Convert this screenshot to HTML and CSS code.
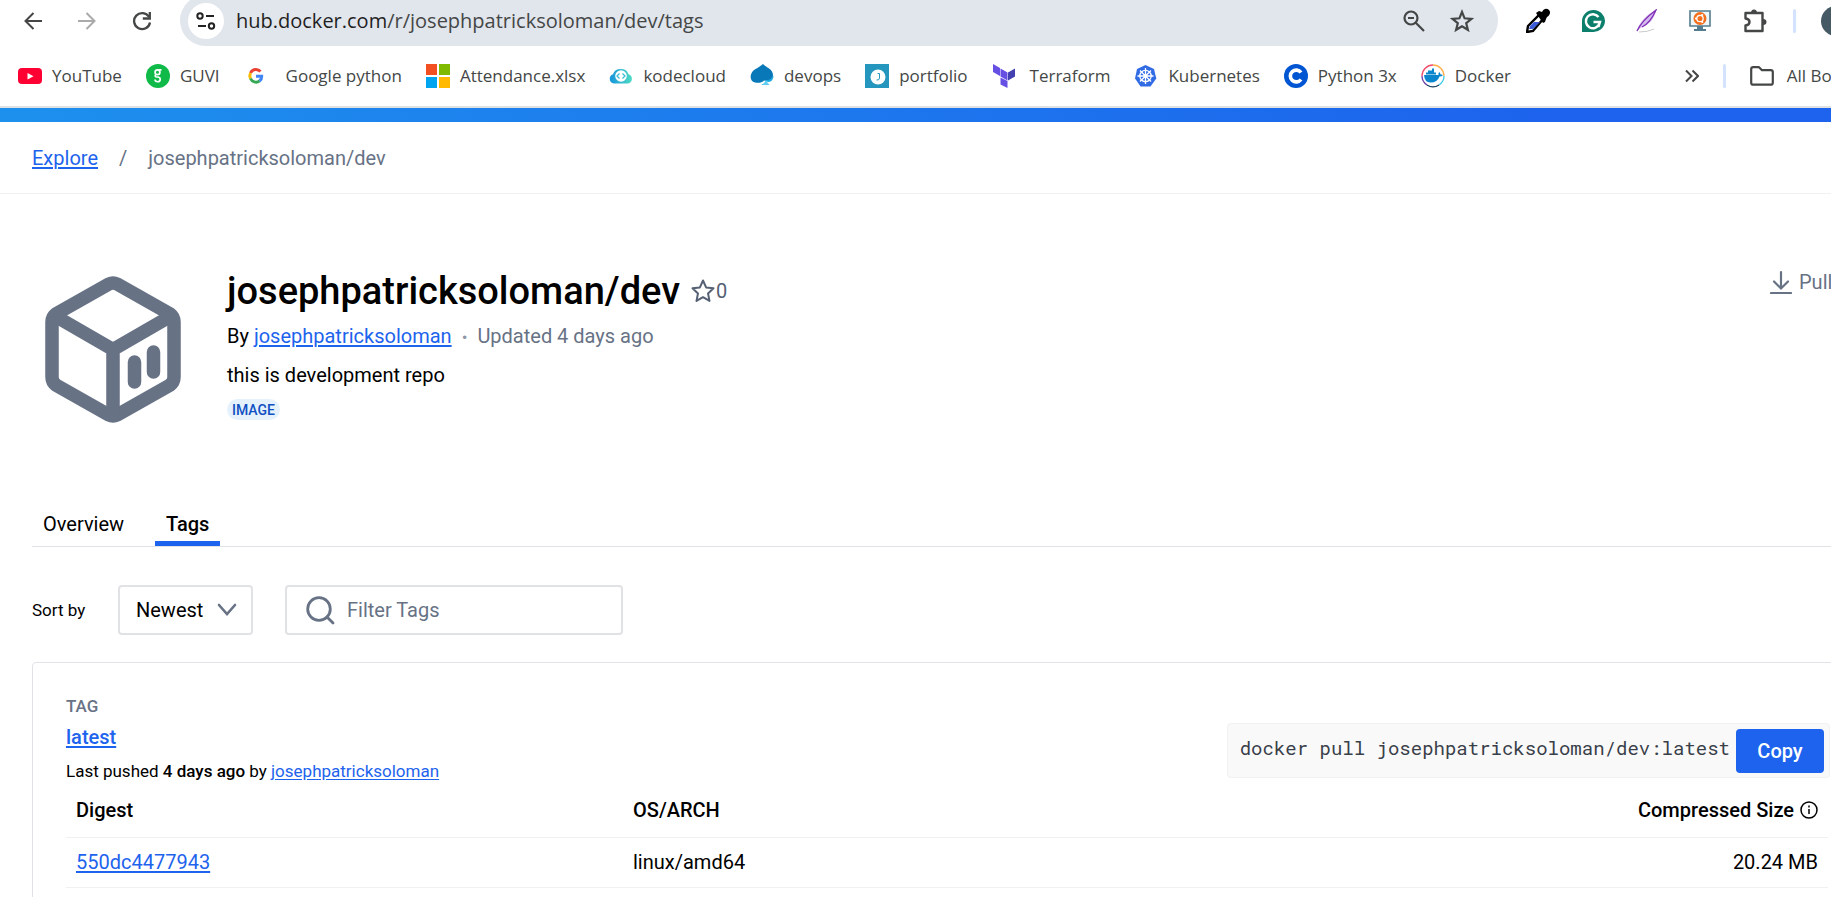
FILE: index.html
```html
<!DOCTYPE html>
<html lang="en">
<head>
<meta charset="utf-8">
<title>josephpatricksoloman/dev Tags</title>
<link rel="stylesheet" href="styles.css">
</head>
<body>
<header class="browser">
  <div class="toolbar">
    <div class="nav">
      <button class="icon-button" aria-label="Back"><svg width="18" height="18" viewBox="0 0 18 18" fill="none" stroke="#444746" stroke-width="2"><path d="M18 9H2M9.500 1L1.500 9l8 8"/></svg></button>
      <button class="icon-button" aria-label="Forward"><svg width="18" height="18" viewBox="0 0 18 18" fill="none" stroke="#aaa" stroke-width="2"><path d="M0 9h16M8.500 1l8 8-8 8"/></svg></button>
      <button class="icon-button" aria-label="Reload"><svg width="20" height="20" viewBox="0 0 20 20" fill="none" stroke="#444746" stroke-width="2.300"><path d="M17 6A8 8 0 1 0 18 11.500"/><path d="M17.800 1v6.500h-7"/></svg></button>
    </div>
    <div class="omnibox">
      <button class="site-info" aria-label="Site information"><svg width="20" height="18" viewBox="0 0 20 18" fill="none" stroke="#222" stroke-width="2"><circle cx="4" cy="4" r="2.700"/><path d="M10 4h8M2 14h8"/><circle cx="15.500" cy="14" r="2.700"/></svg></button>
      <span class="url"><span class="host">hub.docker.com</span>/r/josephpatricksoloman/dev/tags</span>
      <button class="icon-button" aria-label="Zoom"><svg width="22" height="22" viewBox="0 0 22 22" fill="none" stroke="#444746" stroke-width="2.200"><circle cx="8" cy="8" r="6.500"/><path d="M5 8h6M12.500 12.500L21 21"/></svg></button>
      <button class="icon-button" aria-label="Bookmark this tab"><svg width="24" height="24" viewBox="0 0 24 24" fill="none" stroke="#444746" stroke-width="2.200"><path d="M12 3l2.600 6.300 6.900.500-5.300 4.400 1.700 6.600L12 17.200l-5.900 3.600 1.700-6.600L2.500 9.800l6.900-.500z"/></svg></button>
    </div>
    <div class="extensions">
      <button class="icon-button" aria-label="Colour picker"><svg width="24" height="25" viewBox="0 0 24 25"><path d="M1 24l1-6L13 7l4 4L7 23z" fill="#fff" stroke="#000" stroke-width="2.400"/><path d="M3 21l1-3 4-4h6l-7 7z" fill="#3b5bd9"/><path d="M10 5l3-2 3 1c2-4 5-4 7-2s1 5-2 7l-1 2-1 3-2 1z" fill="#000"/></svg></button>
      <button class="icon-button" aria-label="Grammar check"><svg width="24" height="24" viewBox="0 0 24 24"><path d="M1 23V12A11.500 11 0 1 1 12 23z" fill="#0b7f6c"/><path d="M17.500 8A7 7 0 1 0 18.500 14.500M12.500 13H19l-1.500 5" fill="none" stroke="#fff" stroke-width="2.400"/></svg></button>
      <button class="icon-button" aria-label="Feather"><svg width="22" height="24" viewBox="0 0 22 24"><path d="M2 21C3 13 10 6 20 1c-1 7-6 15-14 17z" fill="#d6bcec"/><path d="M1 22C5 13 12 7 20 1 17 8 12 15 6 18" fill="none" stroke="#8130b8" stroke-width="1.300"/><path d="M3 23q9 0 15-3" fill="none" stroke="#ccc"/></svg></button>
      <button class="icon-button" aria-label="Remote desktop"><svg width="22" height="23" viewBox="0 0 22 23"><path d="M1 2h20v15H1z" fill="#eef7fa" stroke="#557d90" stroke-width="1.600"/><circle cx="11" cy="9.500" r="6.500" fill="#f4701e"/><circle cx="11" cy="9.500" r="3.200" fill="none" stroke="#fff" stroke-width="1.300"/><circle cx="7" cy="9.500" r="1.100" fill="#fff"/><circle cx="13.200" cy="6" r="1.100" fill="#fff"/><circle cx="13.200" cy="13" r="1.100" fill="#fff"/><path d="M8 17h6v3h3v2H5v-2h3z" fill="#557d90"/></svg></button>
      <button class="icon-button" aria-label="Extensions"><svg width="26" height="26" viewBox="0 0 26 26"><path d="M3.500 5h17v18h-17v-5.500q4-.500 4-3.500t-4-3.500z" fill="none" stroke="#444746" stroke-width="2.400" stroke-linejoin="round"/><path d="M9 5a3 3.500 0 0 1 6 0zM21 11a3.500 3 0 0 1 0 6z" fill="#444746"/></svg></button>
      <span class="divider"></span>
      <button class="avatar" aria-label="Profile">J</button>
    </div>
  </div>
  <nav class="bookmarks">
    <a class="bookmark" href="#"><svg width="24" height="24" viewBox="0 0 24 24"><rect y="4" width="24" height="16" rx="4" fill="#f03"/><path d="M9.500 9v6.500l6-3.200z" fill="#fff"/></svg><span>YouTube</span></a>
    <a class="bookmark" href="#"><svg width="24" height="24" viewBox="0 0 24 24"><circle cx="12" cy="12" r="12" fill="#0fba48"/><g fill="none" stroke="#fff" stroke-width="1.700"><circle cx="11.500" cy="8.300" r="2.400"/><path d="M15.500 5.800h-3M9.800 10.500q-1.500 2 .7 2.500h1.500a2.600 2.400 0 1 1-3 2.500"/></g></svg><span>GUVI</span></a>
    <a class="bookmark spaced" href="#"><svg width="24" height="24" viewBox="0 0 24 24" fill="none" stroke-width="3"><path d="M16.500 7.500A6 6 0 0 0 6.500 9" stroke="#ea4335"/><path d="M6.500 9a6 6 0 0 0 0 5.500" stroke="#fbbc05"/><path d="M6.500 14.500a6 6 0 0 0 9 2.500" stroke="#34a853"/><path d="M15.500 17a6 6 0 0 0 2.200-4.800H12" stroke="#4285f4"/></svg><span>Google python</span></a>
    <a class="bookmark" href="#"><svg width="24" height="24" viewBox="0 0 24 24"><path d="M0 0h11v11H0z" fill="#f25022"/><path d="M13 0h11v11H13z" fill="#7fba00"/><path d="M0 13h11v11H0z" fill="#00a4ef"/><path d="M13 13h11v11H13z" fill="#ffb900"/></svg><span>Attendance.xlsx</span></a>
    <a class="bookmark" href="#"><svg width="24" height="24" viewBox="0 0 24 24"><defs><linearGradient id="kode"><stop stop-color="#1595dc"/><stop offset="1" stop-color="#4fdcc4"/></linearGradient></defs><path d="M5 19.500a4.800 4.800 0 0 1-1-9.300 8 7 0 0 1 15.500 0 4.800 4.800 0 0 1-.5 9.300z" fill="url(#kode)"/><circle cx="12" cy="12" r="5.800" fill="#fff"/><path d="M10.500 9.500L8 12l2.500 2.500M13.500 9.500L16 12l-2.500 2.500" fill="none" stroke="#35bcd5" stroke-width="1.200"/></svg><span>kodecloud</span></a>
    <a class="bookmark" href="#"><svg width="24" height="24" viewBox="0 0 24 24"><path d="M13 0c3 3.500 10 5 10 11 0 5-5 7-9 5.500C12 19 8 19 5 18.500 1 17.500 0 14 1 10.500 2.500 5 9 4 13 0z" fill="#0878b8"/><path d="M23.500 11.500c0 5-3.500 7.500-7 6q0 2 3 3.500h-8q4-2 4.500-5 5 .5 7.500-4.500z" fill="#18a8de"/><path d="M11 21q4-1 4.500-4.500l1.500.5q0 2 2.500 4z" fill="#62cdf2"/></svg><span>devops</span></a>
    <a class="bookmark" href="#"><svg width="24" height="24" viewBox="0 0 24 24"><path d="M0 0h24v24H0z" fill="#2596be"/><circle cx="13" cy="13" r="7.500" fill="#fff"/><path d="M12.500 9.500h2V14q0 2.500-3 2" fill="none" stroke="#2596be"/></svg><span>portfolio</span></a>
    <a class="bookmark wide" href="#"><svg width="24" height="24" viewBox="0 0 24 24"><path d="M1 0l7 4v8L1 8zM8.500 4.500l7 4v8l-7-4zM8.500 13.500l7 3.500v7l-7-3.500z" fill="#6650e4"/><path d="M16 8.500l7-4v8l-7 4z" fill="#4340b0"/></svg><span>Terraform</span></a>
    <a class="bookmark" href="#"><svg width="24" height="24" viewBox="0 0 24 24"><path d="M11.500 1l8.500 4 2.300 9.500L16.500 22.500H6.500L1 14.500 3 5z" fill="#326ce5"/><g fill="none" stroke="#fff" stroke-width="1.300"><circle cx="11.500" cy="12" r="5.700"/><path d="M11.500 4v16M3.500 12h16M6 6.500l11 11M17 6.500l-11 11"/></g><circle cx="11.500" cy="12" r="1.800" fill="#fff"/></svg><span>Kubernetes</span></a>
    <a class="bookmark" href="#"><svg width="24" height="24" viewBox="0 0 24 24"><circle cx="12" cy="12" r="12" fill="#0056d2"/><path d="M17 8.500a5.900 5.900 0 1 0 0 7" fill="none" stroke="#fff" stroke-width="3.600"/></svg><span>Python 3x</span></a>
    <a class="bookmark" href="#"><svg width="24" height="24" viewBox="0 0 24 24"><g fill="none" stroke-width="1.300"><path d="M12 1A11 11 0 0 0 1 12" stroke="#f04c6c"/><path d="M1 12a11 11 0 0 0 5 9" stroke="#6a3ca8"/><path d="M6 21a11 11 0 0 0 12 0" stroke="#173d58"/><path d="M18 21a11 11 0 0 0 5-9" stroke="#3cc8e8"/><path d="M23 12A11 11 0 0 0 12 1" stroke="#ffb04a"/></g><path d="M3 11h14.500q-.5-2 .8-3 1.200 1 1.200 2.500 1.500-.3 2.500.5-1 1.500-3.500 1.500-2 6-9 6Q3.500 18.500 3 11zM5 8.500h10v2H5zM7 6.500h6v2H7zM11 4.500h2v2h-2z" fill="#0b86cd"/></svg><span>Docker</span></a>
    <button class="more" aria-label="More bookmarks"><svg width="14" height="14" viewBox="0 0 14 14" fill="none" stroke="#444746" stroke-width="2"><path d="M1 1.500L6.500 7 1 12.500M7.500 1.500L13 7l-5.500 5.500"/></svg></button>
    <span class="divider"></span>
    <a class="bookmark all" href="#"><svg width="24" height="20" viewBox="0 0 24 20" fill="none" stroke="#444746" stroke-width="2.200" stroke-linejoin="round"><path d="M1.200 3.200q0-2 2-2H9l3 3h8.800q2 0 2 2v10.500q0 2-2 2H3.200q-2 0-2-2z"/></svg><span>All Bookmarks</span></a>
  </nav>
</header>
<div class="accent"></div>
<nav class="breadcrumb"><a href="#">Explore</a><span>/</span><span>josephpatricksoloman/dev</span></nav>
<main class="page">
  <section class="hero">
    <svg class="repo-logo" width="136" height="147" viewBox="0 0 136 147" fill="none" stroke="#677285" stroke-width="13.500"><path d="M64 8Q68 6 72 8L125 38Q129 41 129 46V101Q129 106 125 109L72 139Q68 141 64 139L11 109Q7 106 7 101V46Q7 41 11 38Z"/><path d="M10 40L68 73.500 126 40M68 72v68"/><path d="M89.500 86v20M108.500 76v20" stroke-linecap="round"/></svg>
    <div class="repo">
      <div class="title-row"><h1>josephpatricksoloman/dev</h1><button class="stars"><svg width="24" height="24" viewBox="0 0 24 24" fill="none" stroke="#556074" stroke-width="2" stroke-linejoin="round"><path d="M12 1.500l3.100 6.900 7.400.900-5.500 5.100 1.500 7.500L12 18.200l-6.500 3.700L7 14.400 1.500 9.300l7.400-.900z"/></svg>0</button></div>
      <p class="byline">By <a href="#">josephpatricksoloman</a><span class="dot">•</span><span class="muted">Updated 4 days ago</span></p>
      <p class="description">this is development repo</p>
      <span class="badge">IMAGE</span>
    </div>
    <div class="pulls"><svg width="24" height="24" viewBox="0 0 24 24" fill="none" stroke="#677285" stroke-width="2.200" stroke-linecap="round"><path d="M12 2v16M5 11.500l7 7 7-7M2 23h20"/></svg><span>Pulls</span></div>
  </section>
  <nav class="tabs"><a href="#">Overview</a><a class="active" href="#">Tags</a></nav>
  <div class="filters">
    <label for="sort">Sort by</label>
    <div class="select-box"><select id="sort"><option>Newest</option></select><svg width="20" height="14" viewBox="0 0 20 14" fill="none" stroke="#677285" stroke-width="2.600" stroke-linecap="round"><path d="M2 2l8 9 8-9"/></svg></div>
    <div class="search-box"><svg width="29" height="29" viewBox="0 0 29 29" fill="none" stroke="#677285" stroke-width="2.800" stroke-linecap="round"><circle cx="13" cy="13" r="11.300"/><path d="M21 21l6 6"/></svg><input type="text" placeholder="Filter Tags" aria-label="Filter Tags"></div>
  </div>
  <section class="card">
    <div class="tag-head">
      <div class="tag-info">
        <div class="tag-label">TAG</div>
        <a class="tag-name" href="#">latest</a>
        <p class="pushed">Last pushed <strong>4 days ago</strong> by <a href="#">josephpatricksoloman</a></p>
      </div>
      <div class="pull-command"><code>docker pull josephpatricksoloman/dev:latest</code><button class="copy">Copy</button></div>
    </div>
    <table>
      <thead><tr><th class="digest">Digest</th><th>OS/ARCH</th><th class="size"><span class="size-title">Compressed Size<svg width="18" height="20" viewBox="0 0 18 20" fill="none" stroke="#000" stroke-width="1.500"><circle cx="9" cy="10" r="8"/><path d="M9 9v5M9 5.500v2"/></svg></span></th></tr></thead>
      <tbody><tr><td><a href="#">550dc4477943</a></td><td>linux/amd64</td><td class="size">20.24 MB</td></tr></tbody>
    </table>
  </section>
</main>
</body>
</html>
```
FILE: styles.css
```css
* { box-sizing: border-box; }
html { overflow: hidden; }
body { margin: 0; overflow: hidden; background: #fff; color: #000; font-family: Roboto, sans-serif; font-size: 20px; line-height: 24px; }
button, input, select { font: inherit; }
button { border: 0; padding: 0; background: none; }
svg { display: block; flex: none; }
a { color: #1d63ed; text-underline-offset: 2px; }
p, h1 { margin: 0; }

.browser { font-family: "Open Sans", sans-serif; color: #444746; overflow: hidden; border-bottom: 2px solid #dfe1e3; }
.toolbar { display: flex; height: 51px; margin-top: -5px; margin-right: -20px; white-space: nowrap; }
.nav { display: flex; align-items: center; gap: 36px; width: 180px; padding-left: 24px; }
.icon-button { display: grid; place-items: center; }
.omnibox { display: flex; flex: 1; align-items: center; gap: 25px; padding: 0 24px 0 8px; border-radius: 26px; background: #e1e5ec; }
.site-info { display: grid; place-items: center; width: 36px; height: 36px; border-radius: 50%; background: #fff; }
.url { flex: 1; margin-left: -13px; font-size: 20px; }
.host { color: #1f1f1f; }
.extensions { display: flex; align-items: center; gap: 31px; padding-left: 28px; }
.divider { width: 3px; height: 24px; border-radius: 2px; background: #d3e3fd; }
.extensions .divider { margin-left: -6px; }
.avatar { width: 30px; height: 30px; margin-left: -6px; border-radius: 50%; background: #455a64; color: #fff; font-size: 17px; text-align: center; }
.bookmarks { display: flex; align-items: center; height: 60px; gap: 24px; padding-left: 18px; font-size: 17px; white-space: nowrap; margin-right: -69px; }
.bookmark { display: flex; align-items: center; gap: 10px; color: #444746; text-decoration: none; }
.spaced { gap: 18px; }
.wide { gap: 14px; }
.more { margin-left: auto; }
.all { gap: 13px; }

.accent { height: 14px; background: linear-gradient(90deg, #1d90ed, #1d63ed 85%); }
.breadcrumb { display: flex; align-items: center; gap: 21px; height: 72px; padding-left: 32px; border-bottom: 1px solid #f0f1f3; color: #677285; }
.page { margin-right: -30px; padding: 82px 0 0 32px; }
.hero { display: flex; height: 228px; padding-left: 13px; }
.repo { flex: 1; margin-left: 46px; }
.title-row { display: flex; align-items: center; gap: 11px; height: 30px; }
h1 { font-size: 38px; line-height: 40px; font-weight: 500; }
.stars { display: flex; align-items: center; gap: 1px; color: #556074; }
.byline { margin-top: 18px; }
.dot { margin: 0 10px; color: #8b95a5; font-size: 17px; }
.muted { color: #677285; }
.description { margin-top: 14px; }
.badge { display: inline-block; height: 21px; margin-top: 12px; padding: 0 5px; border-radius: 11px; background: #e5f2fc; color: #1150c2; font-size: 14px; line-height: 22px; font-weight: 500; }
.pulls { display: flex; gap: 6px; align-items: center; height: 24px; margin-top: -6px; width: 92px; color: #677285; }
.tabs { display: flex; gap: 20px; height: 43px; border-bottom: 1px solid #e1e2e6; }
.tabs a { padding: 8px 11px 0; height: 42px; color: #000; text-decoration: none; }
.tabs .active { border-bottom: 5px solid #1d63ed; font-weight: 500; }
.filters { display: flex; align-items: center; height: 50px; margin-top: 38px; }
.filters label { width: 86px; font-size: 17px; }
.select-box, .search-box { height: 50px; border: 2px solid #e1e2e6; border-radius: 4px; }
.select-box { position: relative; width: 135px; margin-right: 32px; }
.select-box select { width: 100%; height: 46px; padding: 0 17px 0 16px; border: 0; background: none; appearance: none; color: #000; }
.select-box svg { position: absolute; right: 14px; top: 16px; pointer-events: none; }
.search-box { display: flex; align-items: center; gap: 12px; width: 338px; padding-left: 19px; }
.search-box input { flex: 1; min-width: 0; border: 0; padding: 0; outline: 0; background: none; }
.search-box input::placeholder { color: #677285; opacity: 1; }
.card { margin-top: 27px; padding: 31px 32px 32px 33px; border: 1px solid #e1e2e6; border-radius: 4px; }
.tag-head { display: flex; justify-content: space-between; }
.tag-label { color: #677285; font-size: 17px; font-weight: 500; }
.tag-name { display: block; margin-top: 7px; font-weight: 500; }
.pushed { margin-top: 10px; font-size: 17px; }
.pushed strong { font-weight: 500; }
.pull-command { display: flex; align-items: center; gap: 6px; height: 55px; margin-top: 29px; margin-right: -2px; padding: 0 5px 0 12px; border: 1px solid #f0f1f3; border-radius: 4px; background: #f9f9fa; }
code { padding-bottom: 5px; color: #393f49; font: 19px/24px "Roboto Mono", "Liberation Mono", monospace; }
.copy { width: 88px; height: 44px; border-radius: 4px; background: #1d63ed; color: #fff; font-weight: 500; }
table { width: 100%; border-collapse: collapse; }
th, td { padding: 0 10px; border-bottom: 1px solid #f0f1f3; text-align: left; font-weight: 400; }
th { height: 54px; font-weight: 500; }
td { height: 50px; }
.digest { width: 557px; }
th.size, td.size { text-align: right; }
.size-title { display: inline-flex; align-items: center; gap: 6px; }
```
